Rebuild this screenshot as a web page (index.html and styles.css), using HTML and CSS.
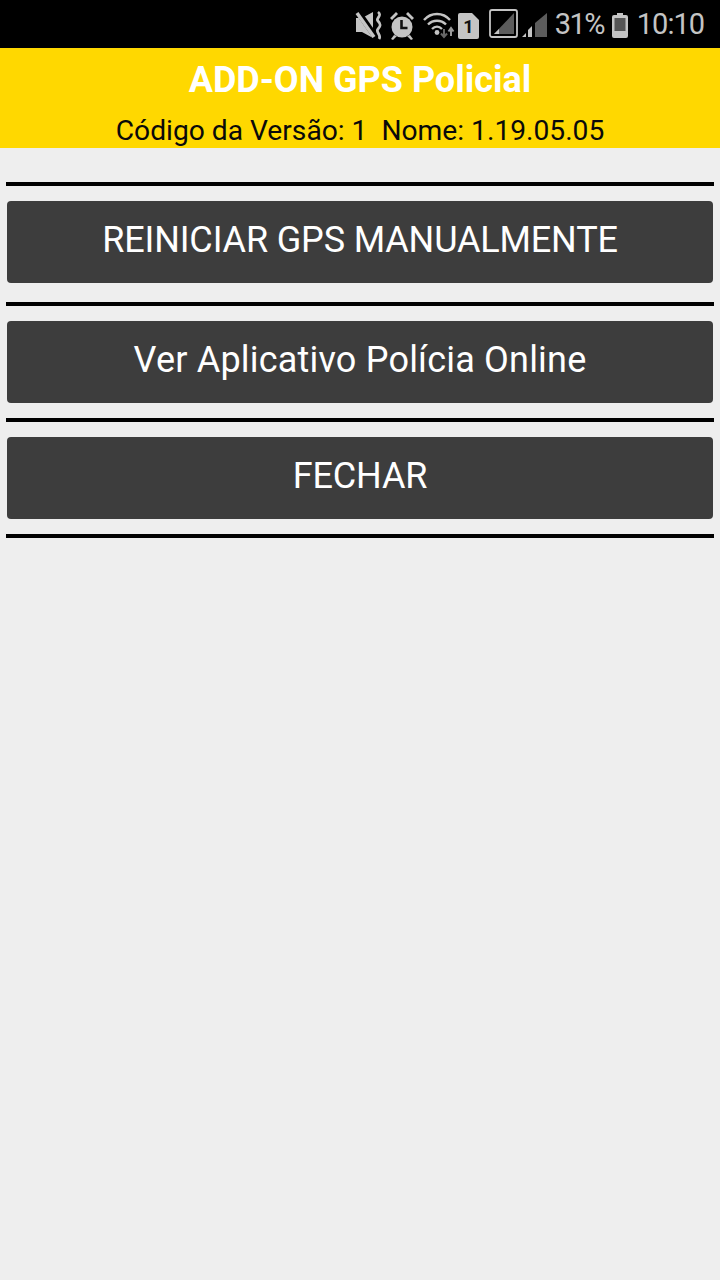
FILE: index.html
```html
<!DOCTYPE html>
<html lang="pt">
<head>
    <meta charset="UTF-8">
    <meta name="viewport" content="width=device-width, initial-scale=1.0">
    <title>ADD-ON GPS Policial</title>
    <link rel="stylesheet" href="styles.css">
</head>
<body>
    <div class="status-bar">
        <svg class="icon-mute" width="28" height="48" viewBox="0 0 28 48">
            <path d="M1 18h6l11-6v26l-11-6H1z" fill="#c4c4c4"/>
            <path d="M1 9l19 27" stroke="#000" stroke-width="6"/>
            <path d="M2 13l17 24" stroke="#c4c4c4" stroke-width="3.500"/>
            <path d="M23 12c5 4-3 6 0 9s3 5 0 8 4 6 1 10" fill="none" stroke="#c4c4c4" stroke-width="2.800"/>
        </svg>
        <svg class="icon-alarm" width="26" height="48" viewBox="0 0 26 48">
            <circle cx="13" cy="27" r="10.500" fill="#c4c4c4"/>
            <path d="M1 18l6-6 2 2-6 6zM25 18l-6-6-2 2 6 6zM5 35l-3 4 2 1 4-4zM21 35l3 4-2 1-4-4z" fill="#c4c4c4"/>
            <path d="M12.500 20v8h6" fill="none" stroke="#111" stroke-width="2.600"/>
        </svg>
        <svg class="icon-wifi" width="32" height="48" viewBox="0 0 32 48">
            <path d="M1 20c7-8 19-8 26 0M5 24.500c5-5 13-5 18 0M9 29c3-3 7-3 10 0" fill="none" stroke="#c4c4c4" stroke-width="2.400"/>
            <circle cx="14" cy="32.500" r="2.400" fill="#c4c4c4"/>
            <path d="M21 29v8M18 33.500l3 3.500 3-3.500" fill="none" stroke="#666" stroke-width="2"/>
            <path d="M28 36v-8M25.500 31.500l2.500-3.500 2.500 3.500" fill="none" stroke="#999" stroke-width="2"/>
        </svg>
        <svg class="icon-sim" width="21" height="48" viewBox="0 0 21 48">
            <path d="M2 13h12l7 7v17a2 2 0 0 1-2 2H2a2 2 0 0 1-2-2V15a2 2 0 0 1 2-2z" fill="#c4c4c4"/>
            <text x="10.500" y="33" class="sim-digit">1</text>
        </svg>
        <svg class="icon-signal-box" width="29" height="48" viewBox="0 0 29 48">
            <rect x="1" y="10" width="27" height="27" rx="2" fill="none" stroke="#c4c4c4" stroke-width="1.800"/>
            <path d="M25 13v21H5z" fill="#5c5c5c"/>
            <path d="M10 29v5H5z" fill="#c4c4c4"/>
        </svg>
        <svg class="icon-signal" width="25" height="48" viewBox="0 0 25 48">
            <path d="M0 37l4-4v4zM6 37v-7l4-4v11z" fill="#c4c4c4"/>
            <path d="M13 37V23l12-10v24z" fill="#5c5c5c"/>
        </svg>
        <span class="percent">31%</span>
        <svg class="icon-battery" width="16" height="48" viewBox="0 0 16 48">
            <path d="M5 13h6v2h3a2 2 0 0 1 2 2v19a2 2 0 0 1-2 2H2a2 2 0 0 1-2-2V17a2 2 0 0 1 2-2h3z" fill="#c4c4c4"/>
            <rect x="2.500" y="18" width="11" height="13" fill="#555"/>
        </svg>
        <span class="clock">10:10</span>
    </div>

    <header class="app-header">
        <h1>ADD-ON GPS Policial</h1>
        <p>Código da Versão: 1&nbsp; Nome: 1.19.05.05</p>
    </header>

    <main class="content">
        <hr class="divider">
        <button class="action-btn action-btn-caps">REINICIAR GPS MANUALMENTE</button>
        <hr class="divider">
        <button class="action-btn action-btn-mixed">Ver Aplicativo Polícia Online</button>
        <hr class="divider">
        <button class="action-btn action-btn-caps">FECHAR</button>
        <hr class="divider">
    </main>
</body>
</html>
```

FILE: styles.css
```css
* {
    box-sizing: border-box;
    margin: 0;
    padding: 0;
}

body {
    font-family: 'Roboto', sans-serif;
    background: #eeeeee;
    min-height: 1280px;
}

.status-bar {
    height: 48px;
    background: #000;
    display: flex;
    align-items: center;
    justify-content: flex-end;
    padding-right: 16px;
    color: #c4c4c4;
}

.icon-mute { margin-right: 6px; }
.icon-alarm { margin-right: 8px; }
.icon-wifi { margin-right: 3px; }
.icon-sim { margin-right: 10px; }
.icon-signal-box { margin-right: 4px; }
.icon-signal { margin-right: 8px; }
.icon-battery { margin: 0 9px 0 8px; }

.sim-digit {
    font: 700 18px 'Roboto', sans-serif;
    fill: #111;
    text-anchor: middle;
}

.percent,
.clock {
    font-size: 29px;
    letter-spacing: -1px;
    line-height: 48px;
}

.percent {
    letter-spacing: -1.6px;
}

.app-header {
    height: 100px;
    background: #ffd800;
    text-align: center;
}

.app-header h1 {
    font-size: 36px;
    font-weight: 700;
    line-height: 40px;
    padding-top: 12px;
    color: #fff;
}

.app-header p {
    font-size: 28.2px;
    line-height: 32px;
    margin-top: 15px;
    color: #0a0a0a;
}

.content {
    padding: 34px 6px 0;
}

.divider {
    border: 0;
    height: 4px;
    background: #000;
}

.action-btn {
    display: block;
    width: calc(100% - 2px);
    height: 82px;
    margin: 15px 1px;
    padding-bottom: 4px;
    border: 0;
    border-radius: 4px;
    background: #3d3d3d;
    color: #fff;
    font-family: 'Roboto', sans-serif;
    font-size: 36px;
}

.action-btn-caps {
    letter-spacing: -0.15px;
}

.action-btn-mixed {
    letter-spacing: 0.2px;
}

.action-btn:first-of-type {
    margin-bottom: 19px;
}
```
